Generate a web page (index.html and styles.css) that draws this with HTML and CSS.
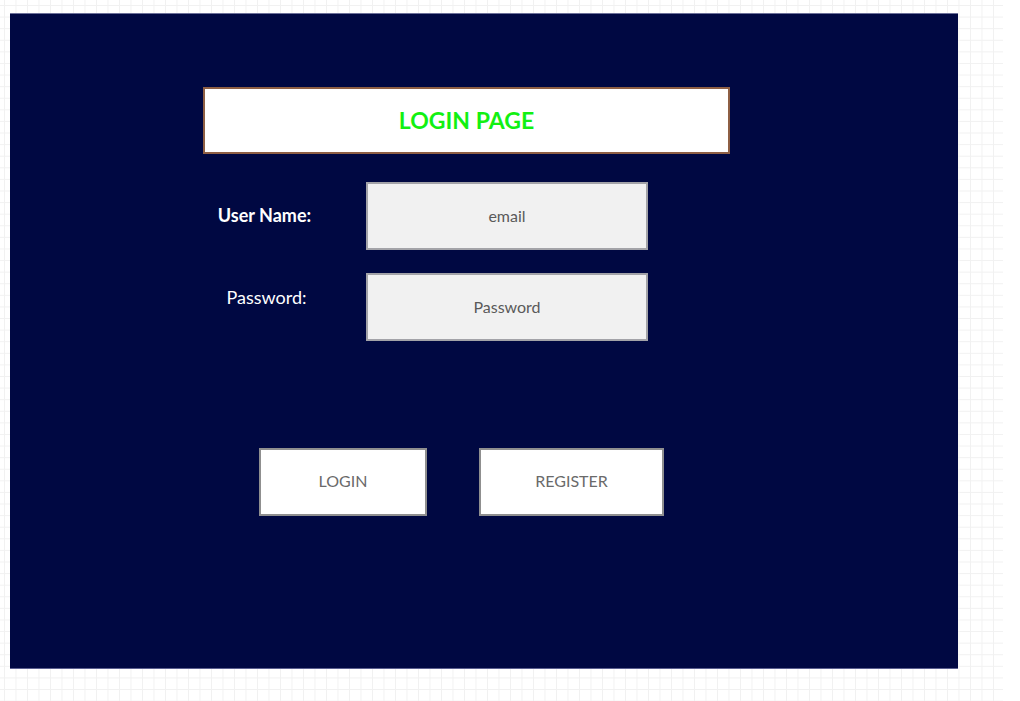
FILE: index.html
```html
<!DOCTYPE html>
<html lang="en">
<head>
<meta charset="utf-8">
<title>Login Page</title>
<link rel="stylesheet" href="styles.css">
</head>
<body>
<div class="canvas">
  <main class="panel">
    <div class="title-box">LOGIN PAGE</div>
    <div class="form">
      <div class="row">
        <div class="label label-user">User Name:</div>
        <div class="field">email</div>
      </div>
      <div class="row">
        <div class="label label-pass">Password:</div>
        <div class="field">Password</div>
      </div>
    </div>
    <div class="actions">
      <div class="btn btn-login">LOGIN</div>
      <div class="btn btn-register">REGISTER</div>
    </div>
  </main>
</div>
</body>
</html>
```

FILE: styles.css
```css
html, body {
  margin: 0;
  padding: 0;
  background: #ffffff;
}
body {
  width: 1020px;
  height: 701px;
  overflow: hidden;
  font-family: Lato, "Open Sans", "Liberation Sans", sans-serif;
}
.canvas {
  width: 1003px;
  height: 701px;
  box-sizing: border-box;
  padding: 13px 0 0 10px;
  background-color: #ffffff;
  background-image:
    linear-gradient(to right, #f1f1f1 1px, transparent 1px),
    linear-gradient(to bottom, #f1f1f1 1px, transparent 1px);
  background-size: 11.5px 11.6px;
  background-position: 4px 5px;
}
.panel {
  width: 948px;
  height: 656px;
  box-sizing: border-box;
  background: #000842;
  border-top: 1px solid #6c7099;
  border-bottom: 1px solid #5c6090;
  display: flex;
  flex-direction: column;
  padding: 73px 0 0 193px;
}
.title-box {
  width: 527px;
  height: 67px;
  box-sizing: border-box;
  background: #ffffff;
  border: 2px solid #8e5f44;
  display: flex;
  align-items: center;
  justify-content: center;
  color: #12f012;
  font-weight: 700;
  font-size: 23px;
  padding-bottom: 2px;
}
.form {
  display: flex;
  flex-direction: column;
  gap: 23px;
  margin-top: 28px;
}
.row {
  display: flex;
  align-items: flex-start;
}
.label {
  width: 126px;
  text-align: center;
  color: #ffffff;
  font-size: 18px;
  line-height: 20px;
  margin-right: 37px;
}
.label-user {
  font-weight: 700;
  padding-top: 23px;
  padding-right: 3px;
  box-sizing: border-box;
}
.label-pass {
  padding-top: 14px;
  padding-left: 1px;
  box-sizing: border-box;
}
.field {
  width: 282px;
  height: 68px;
  box-sizing: border-box;
  background: #f1f1f1;
  border: 2px solid #a3a3a8;
  display: flex;
  align-items: center;
  justify-content: center;
  color: #5a5a5a;
  font-size: 16px;
  padding-bottom: 2px;
}
.actions {
  display: flex;
  gap: 52px;
  margin-top: 107px;
  margin-left: 56px;
}
.btn {
  height: 68px;
  box-sizing: border-box;
  background: #ffffff;
  border: 2px solid #8f8f8f;
  display: flex;
  align-items: center;
  justify-content: center;
  color: #6a6a6a;
  font-size: 16px;
  padding-bottom: 3px;
}
.btn-login {
  width: 168px;
}
.btn-register {
  width: 185px;
}
```
